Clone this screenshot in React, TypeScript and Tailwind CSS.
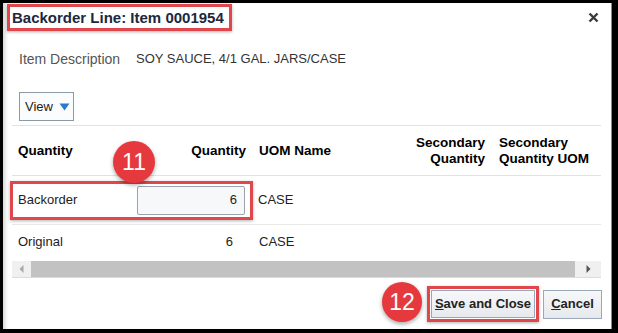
import React from 'react';

const font = { fontFamily: '"Liberation Sans", Arial, sans-serif' };

const Badge = ({ n, className }: { n: string; className: string }) => (
  <div
    className={`absolute flex items-center justify-center rounded-full bg-[#e5393e] text-white text-[23px] leading-none shadow-[0_2px_4px_rgba(0,0,0,0.35)] ${className}`}
  >
    {n}
  </div>
);

export default function App() {
  return (
    <div className="w-[618px] h-[333px] bg-black pt-[3px] pl-[3px] pr-[6px] pb-[4px]" style={font}>
      <div className="relative w-full h-full bg-white border-r border-[#8a8a8a] shadow-[inset_5px_0_4px_-3px_rgba(0,0,0,0.18)] flex flex-col">
        {/* Header */}
        <div className="flex items-start justify-between h-[28px]">
          <div className="ml-[4px] mt-[1px] h-[27px] w-[225px] border-[3px] border-[#e0474c] shadow-[0_1px_3px_rgba(0,0,0,0.3)] flex items-center pl-[2px]">
            <span className="text-[15px] font-bold text-[#1c2740] leading-none">Backorder Line: Item 0001954</span>
          </div>
          <svg className="mt-[9px] mr-[12px]" width="11" height="11" viewBox="0 0 11 11">
            <path d="M1.5 1.5 L9.5 9.5 M9.5 1.5 L1.5 9.5" stroke="#3a3a3a" strokeWidth="2.4" />
          </svg>
        </div>

        {/* Item description */}
        <div className="flex items-center mt-[19px] h-[18px] pl-[16px]">
          <span className="w-[117px] text-[14px] text-[#555]">Item Description</span>
          <span className="text-[13px] text-[#333]">SOY SAUCE, 4/1 GAL. JARS/CASE</span>
        </div>

        {/* View */}
        <div className="mt-[24px] pl-[16px]">
          <div className="w-[55px] h-[29px] border border-[#8c99a8] bg-[#fbfcfd] flex items-center pl-[5px] gap-[6px]">
            <span className="text-[13px] text-[#222]">View</span>
            <svg width="11" height="8" viewBox="0 0 11 8">
              <path d="M0.5 0.5 L10.5 0.5 L5.5 7.5 Z" fill="#2b79cf" />
            </svg>
          </div>
        </div>

        {/* Table */}
        <div className="ml-[9px] w-[589px] mt-[4px] border-t border-[#e2e2e2] text-[13px] text-[#222]">
          <div className="flex items-center h-[50px] border-b border-[#e2e2e2] font-bold text-[13.5px] text-black leading-[16px]">
            <div className="w-[125px] pl-[6px]">Quantity</div>
            <div className="w-[109px] text-right">Quantity</div>
            <div className="w-[120px] pl-[13px]">UOM Name</div>
            <div className="w-[119px] text-right">Secondary<br />Quantity</div>
            <div className="pl-[14px]">Secondary<br />Quantity UOM</div>
          </div>
          <div className="flex items-center h-[49px] border-b border-[#e8e8e8]">
            <div className="-ml-[2px] w-[243px] h-[39px] border-[3px] border-[#e0474c] shadow-[0_1px_3px_rgba(0,0,0,0.3)] flex items-center">
              <div className="w-[124px] pl-[5px]">Backorder</div>
              <div className="w-[108px] h-[29px] border border-[#9aa3ad] rounded-[2px] bg-[#f6f8fa] flex items-center justify-end pr-[7px]">
                6
              </div>
            </div>
            <div className="pl-[5px]">CASE</div>
          </div>
          <div className="flex items-center h-[34px]">
            <div className="w-[125px] pl-[6px]">Original</div>
            <div className="w-[109px] text-right pr-[13px]">6</div>
            <div className="pl-[13px]">CASE</div>
          </div>
          {/* Scrollbar */}
          <div className="mt-[2px] h-[17px] flex items-stretch bg-[#f0f0f0] border-b border-[#dcdcdc]">
            <div className="w-[19px] flex items-center justify-center">
              <svg width="5" height="8" viewBox="0 0 5 8">
                <path d="M4.5 0 L0.5 4 L4.5 8 Z" fill="#a8a8a8" />
              </svg>
            </div>
            <div className="flex-1 bg-[#c2c2c2]" />
            <div className="w-[26px] flex items-center justify-center">
              <svg width="5" height="8" viewBox="0 0 5 8">
                <path d="M0.5 0 L4.5 4 L0.5 8 Z" fill="#555" />
              </svg>
            </div>
          </div>
        </div>

        {/* Footer */}
        <div className="flex justify-end items-center gap-[4px] mt-[8px] pr-[9px]">
          <div className="border-[3px] border-[#e0474c] p-[1px] shadow-[0_1px_3px_rgba(0,0,0,0.3)]">
            <button className="h-[28px] w-[104px] border border-[#9aa7b8] bg-gradient-to-b from-[#f7f8fa] to-[#e6e9ed] text-[13px] font-bold text-[#222]">
              <span className="underline">S</span>ave and Close
            </button>
          </div>
          <button className="h-[29px] w-[59px] border border-[#9aa7b8] bg-gradient-to-b from-[#f7f8fa] to-[#e6e9ed] text-[13px] font-bold text-[#222]">
            <span className="underline">C</span>ancel
          </button>
        </div>

        <Badge n="11" className="left-[110px] top-[138px] w-[42px] h-[42px]" />
        <Badge n="12" className="left-[379px] top-[279px] w-[40px] h-[40px]" />
      </div>
    </div>
  );
}
